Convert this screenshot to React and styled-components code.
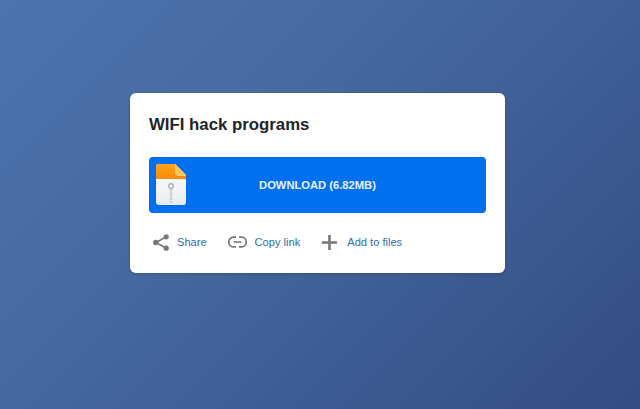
import React from "react";
import styled, { createGlobalStyle } from "styled-components";

const GlobalStyle = createGlobalStyle`
  html, body {
    margin: 0;
    padding: 0;
  }
  body {
    font-family: "Liberation Sans", Arial, sans-serif;
  }
`;

const Page = styled.div`
  width: 640px;
  height: 409px;
  box-sizing: border-box;
  padding: 93px 135px 0 130px;
  overflow: hidden;
  background: linear-gradient(135deg, #4d73ae 0%, #476ca3 30%, #3f5f97 60%, #344c82 100%);
`;

const Card = styled.div`
  width: 375px;
  height: 180px;
  box-sizing: border-box;
  padding: 22px 19px 0;
  background: #fff;
  border-radius: 6px;
  box-shadow: 0 1px 3px rgba(30, 45, 85, 0.3);
`;

const Title = styled.h1`
  margin: 0;
  font-size: 16.8px;
  line-height: 20px;
  font-weight: 700;
  color: #212529;
`;

const DownloadButton = styled.a`
  position: relative;
  display: flex;
  align-items: center;
  justify-content: center;
  width: 337px;
  height: 56px;
  margin-top: 22px;
  border-radius: 4px;
  background: #0070f0;
  color: #eaf3ff;
  font-size: 11.2px;
  font-weight: 700;
`;

const ZipIcon = styled.svg`
  position: absolute;
  left: 7px;
  top: 7px;
`;

const Actions = styled.div`
  display: flex;
  align-items: center;
  margin-top: 19px;
  margin-left: 4px;
`;

const Action = styled.a`
  display: flex;
  align-items: center;
  gap: ${(p) => p.$gap}px;
  margin-right: ${(p) => p.$space}px;
  color: #2f6cad;
  font-size: 11.1px;
  line-height: 20px;
`;

const ShareIcon = () => (
  <svg width="16" height="17" viewBox="0 0 16 17">
    <path d="M12.8 3L3 8.5l9.8 5.5" fill="none" stroke="#75777a" strokeWidth="1.5" />
    <circle cx="13.2" cy="2.8" r="2.6" fill="#75777a" />
    <circle cx="2.8" cy="8.5" r="2.7" fill="#75777a" />
    <circle cx="13.2" cy="14.2" r="2.6" fill="#75777a" />
  </svg>
);

const LinkIcon = () => (
  <svg width="19" height="12" viewBox="0 0 19 12">
    <path
      d="M8 1.2H5.5a4.8 4.8 0 0 0 0 9.6H8M11 1.2h2.5a4.8 4.8 0 0 1 0 9.6H11M5.5 6h8"
      fill="none"
      stroke="#75777a"
      strokeWidth="1.7"
    />
  </svg>
);

const PlusIcon = () => (
  <svg width="15" height="15" viewBox="0 0 15 15">
    <path d="M7.5 0v15M0 7.5h15" fill="none" stroke="#75777a" strokeWidth="2.6" />
  </svg>
);

const App = () => {
  return (
    <Page>
      <GlobalStyle />
      <Card>
        <Title>WIFI hack programs</Title>
        <DownloadButton>
          <ZipIcon width="30" height="41" viewBox="0 0 30 41">
            <defs>
              <linearGradient id="zipBody" x1="0" y1="0" x2="0" y2="1">
                <stop offset="0" stopColor="#ffffff" />
                <stop offset="1" stopColor="#e9ecef" />
              </linearGradient>
              <linearGradient id="zipTop" x1="0" y1="0" x2="0" y2="1">
                <stop offset="0" stopColor="#ffa51f" />
                <stop offset="1" stopColor="#f98a00" />
              </linearGradient>
            </defs>
            <path d="M3 0h16l11 11v27a3 3 0 0 1-3 3H3a3 3 0 0 1-3-3V3a3 3 0 0 1 3-3z" fill="url(#zipBody)" />
            <path d="M3 0h16l11 11v4H0V3a3 3 0 0 1 3-3z" fill="url(#zipTop)" />
            <path d="M19 0l11 11v1h-8a3 3 0 0 1-3-3z" fill="#fdc75a" />
            <circle cx="15" cy="22" r="2.3" fill="none" stroke="#b0b3b6" strokeWidth="1.4" />
            <path d="M15 25v14" stroke="#c0c3c6" strokeWidth="2.6" strokeDasharray="1.4 1" />
          </ZipIcon>
          DOWNLOAD (6.82MB)
        </DownloadButton>
        <Actions>
          <Action $gap={8} $space={21}>
            <ShareIcon />
            Share
          </Action>
          <Action $gap={8} $space={22}>
            <LinkIcon />
            Copy link
          </Action>
          <Action $gap={10} $space={0}>
            <PlusIcon />
            Add to files
          </Action>
        </Actions>
      </Card>
    </Page>
  );
};

export default App;
